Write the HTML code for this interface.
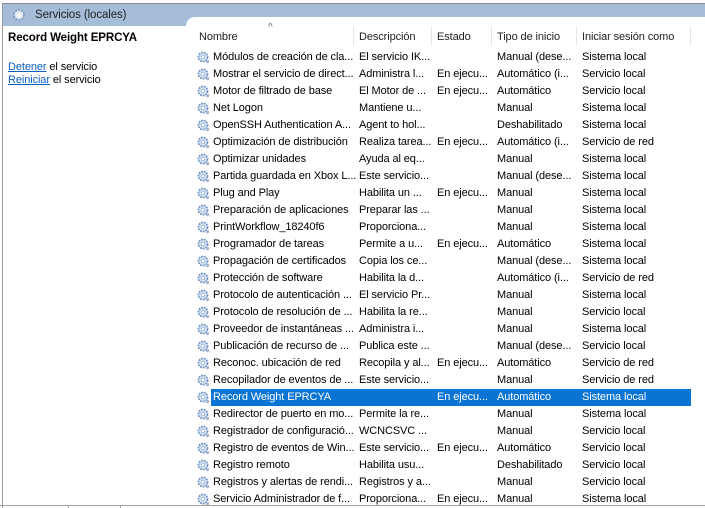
<!DOCTYPE html>
<html><head><meta charset="utf-8"><style>
body{margin:0;width:705px;height:508px;overflow:hidden;background:#fff;font-family:"Liberation Sans",sans-serif;font-size:11px;letter-spacing:-0.1px;color:#000;position:relative}
.a{position:absolute;white-space:nowrap}
.bar{position:absolute;left:2px;top:3px;width:703px;height:22px;background:#a6bdd9;border-top:1px solid #8a8a8a}
.wh{position:absolute;left:186px;top:17px;width:519px;height:20px;background:#fff;border-top-left-radius:9px}
.row{position:absolute;left:0;height:17px;width:705px}
.row span{position:absolute;top:2px}
.sel{background:#0a74d4;color:#fff}
.ic{position:absolute;left:197px;top:2px;width:13px;height:13px}
.hd{position:absolute;top:31px;font-size:11px;color:#222}
.sep{position:absolute;top:26px;width:1px;height:20px;background:#e5e5e5}
a{color:#0a5fc4;text-decoration:underline}
</style></head><body>
<div class="bar"></div>
<div class="a" style="left:2px;top:3px;width:1px;height:505px;background:#9a9a9a"></div>
<div class="wh"></div>
<svg class="a" style="left:12px;top:8px" width="14" height="14" viewBox="0 0 14 14"><circle cx="7" cy="7" r="5" fill="#dbe6f2" stroke="#6f8fb5" stroke-width="1.4" stroke-dasharray="2 1.2"/><circle cx="7" cy="7" r="2" fill="#fff"/></svg>
<div class="a" style="left:35px;top:9px;font-size:11.5px;color:#222">Servicios (locales)</div>
<div class="a" style="left:8px;top:32px;font-weight:bold;font-size:11.5px">Record Weight EPRCYA</div>
<div class="a" style="left:8px;top:61px"><a>Detener</a> el servicio</div>
<div class="a" style="left:8px;top:74px"><a>Reiniciar</a> el servicio</div>
<div class="a" style="left:268px;top:22px;font-size:10px;color:#666">^</div>
<div class="hd" style="left:199px">Nombre</div>
<div class="hd" style="left:359px">Descripción</div>
<div class="hd" style="left:437px">Estado</div>
<div class="hd" style="left:497px">Tipo de inicio</div>
<div class="hd" style="left:582px">Iniciar sesión como</div>
<div class="sep" style="left:353px"></div><div class="sep" style="left:431px"></div><div class="sep" style="left:491px"></div><div class="sep" style="left:576px"></div><div class="sep" style="left:690px"></div>
<div id="rows"></div>
<div class="a" style="left:0;top:505px;width:705px;height:1px;background:#a0a0a0"></div>
<div class="a" style="left:68px;top:505px;width:1px;height:3px;background:#a0a0a0"></div>
<div class="a" style="left:120px;top:505px;width:1px;height:3px;background:#a0a0a0"></div>
<script>
var d=[["Módulos de creación de cla...","El servicio IK...","","Manual (dese...","Sistema local"],
["Mostrar el servicio de direct...","Administra l...","En ejecu...","Automático (i...","Servicio local"],
["Motor de filtrado de base","El Motor de ...","En ejecu...","Automático","Servicio local"],
["Net Logon","Mantiene u...","","Manual","Sistema local"],
["OpenSSH Authentication A...","Agent to hol...","","Deshabilitado","Sistema local"],
["Optimización de distribución","Realiza tarea...","En ejecu...","Automático (i...","Servicio de red"],
["Optimizar unidades","Ayuda al eq...","","Manual","Sistema local"],
["Partida guardada en Xbox L...","Este servicio...","","Manual (dese...","Sistema local"],
["Plug and Play","Habilita un ...","En ejecu...","Manual","Sistema local"],
["Preparación de aplicaciones","Preparar las ...","","Manual","Sistema local"],
["PrintWorkflow_18240f6","Proporciona...","","Manual","Sistema local"],
["Programador de tareas","Permite a u...","En ejecu...","Automático","Sistema local"],
["Propagación de certificados","Copia los ce...","","Manual (dese...","Sistema local"],
["Protección de software","Habilita la d...","","Automático (i...","Servicio de red"],
["Protocolo de autenticación ...","El servicio Pr...","","Manual","Sistema local"],
["Protocolo de resolución de ...","Habilita la re...","","Manual","Servicio local"],
["Proveedor de instantáneas ...","Administra i...","","Manual","Sistema local"],
["Publicación de recurso de ...","Publica este ...","","Manual (dese...","Servicio local"],
["Reconoc. ubicación de red","Recopila y al...","En ejecu...","Automático","Servicio de red"],
["Recopilador de eventos de ...","Este servicio...","","Manual","Servicio de red"],
["Record Weight EPRCYA","","En ejecu...","Automático","Sistema local"],
["Redirector de puerto en mo...","Permite la re...","","Manual","Sistema local"],
["Registrador de configuració...","WCNCSVC ...","","Manual","Servicio local"],
["Registro de eventos de Win...","Este servicio...","En ejecu...","Automático","Servicio local"],
["Registro remoto","Habilita usu...","","Deshabilitado","Servicio local"],
["Registros y alertas de rendi...","Registros y a...","","Manual","Servicio local"],
["Servicio Administrador de f...","Proporciona...","En ejecu...","Manual","Sistema local"]];
var x=[213,359,437,497,582],h="";
var ic='<svg class="ic" viewBox="0 0 13 13"><circle cx="6" cy="6" r="4.6" fill="#d3e1f1" stroke="#6a8fc0" stroke-width="1.6" stroke-dasharray="1.8 1"/><circle cx="6" cy="6" r="1.8" fill="#fff" stroke="#7f9cc4" stroke-width=".6"/><circle cx="10.5" cy="10.5" r="1.8" fill="#a9bbd2"/></svg>';
d.forEach(function(r,i){var t=49+i*17,s=i==20;
h+='<div class="row" style="top:'+t+'px">'+(s?'<div class="a sel" style="left:211px;top:0;width:480px;height:17px"></div>':'')+ic;
r.forEach(function(c,j){h+='<span style="left:'+x[j]+'px'+(s?';color:#fff':'')+'">'+c+'</span>'});h+='</div>'});
document.getElementById('rows').innerHTML=h;
</script>
</body></html>
